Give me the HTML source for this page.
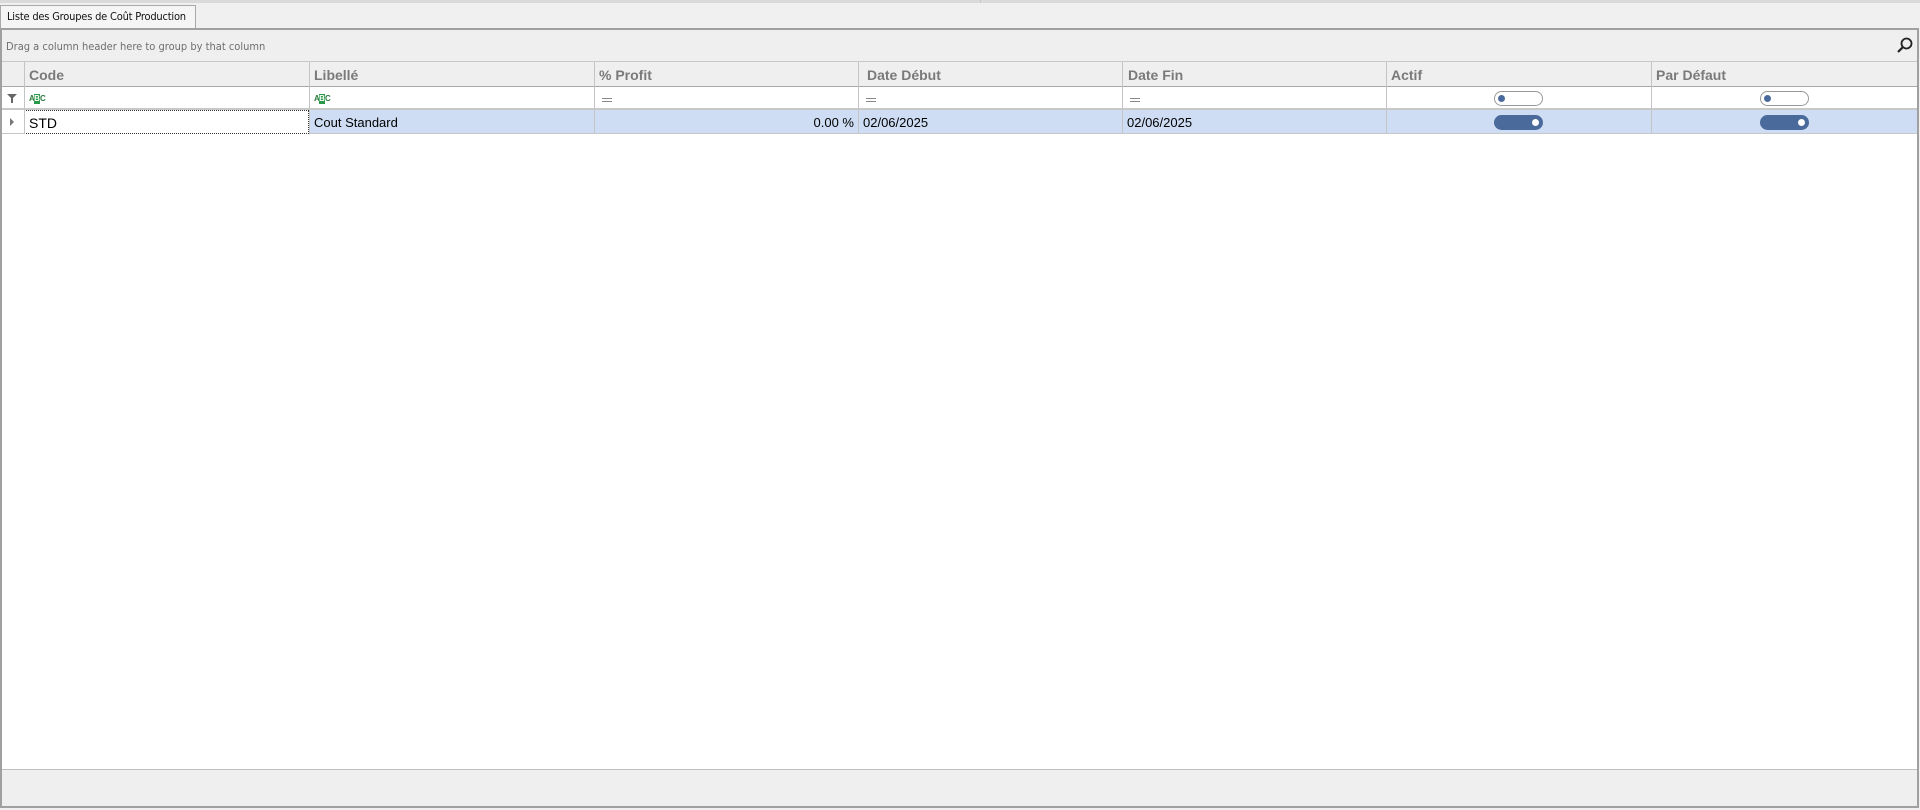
<!DOCTYPE html>
<html><head><meta charset="utf-8"><style>
*{margin:0;padding:0;box-sizing:border-box}
body{width:1920px;height:810px;background:#f0f0f0;position:relative;overflow:hidden;font-family:Tahoma,"DejaVu Sans","Liberation Sans",sans-serif}
.a{position:absolute}
.t{font-size:13px;color:#000;font-family:"Liberation Sans",sans-serif}
.h{font-size:14px;color:#7a7a7a;font-weight:bold;font-family:"Liberation Sans",sans-serif}
.abc{position:absolute;height:10px;font-family:"Liberation Sans",sans-serif;font-size:8px;line-height:10px;font-weight:bold;color:#2a7a3a}
.abc span{display:inline-block;width:5px;text-align:center}
.abc .m{background:#2a9a4a;color:#fff;width:6px}
</style></head><body>
<div class="a" style="left:0;top:0;width:1920px;height:3px;background:#dadada"></div>
<div class="a" style="left:980px;top:0;width:1px;height:3px;background:#c8c8c8"></div>
<div class="a" style="left:0;top:5px;width:196px;height:24px;background:#f5f5f5;border:1px solid #a8a8a8;border-bottom:none"></div>
<div class="a" style="left:7px;top:10px;font-size:11px;color:#111;font-family:'DejaVu Sans Condensed','Liberation Sans Narrow','Liberation Sans',sans-serif;letter-spacing:-0.2px">Liste des Groupes de Coût Production</div>
<div class="a" style="left:0;top:28px;width:1919px;height:780px;border:2px solid #a0a0a0;background:#fff"></div>
<div class="a" style="left:2px;top:30px;width:1915px;height:32px;background:#efefef;border-bottom:1px solid #c8c8c8"></div>
<div class="a" style="left:6px;top:40px;font-size:11px;color:#6f6f6f;font-family:'DejaVu Sans Condensed','Liberation Sans',sans-serif">Drag a column header here to group by that column</div>
<svg class="a" style="left:1896px;top:37px" width="18" height="17" viewBox="0 0 18 17"><circle cx="10.5" cy="6.5" r="5" fill="none" stroke="#222" stroke-width="1.8"/><path d="M7 10 L2 15" stroke="#222" stroke-width="2.2"/></svg>
<div class="a" style="left:2px;top:62px;width:1915px;height:25px;background:#efefef;border-bottom:1px solid #a8a8a8"></div>
<div class="a" style="left:2px;top:87px;width:1915px;height:23px;background:#fff;border-bottom:2px solid #c8c8c8"></div>
<div class="a" style="left:24px;top:110px;width:1893px;height:24px;background:#cfddf4;border-bottom:1px solid #c8c8c8"></div>
<div class="a" style="left:2px;top:110px;width:22px;height:24px;background:#fff;border-bottom:1px solid #c8c8c8"></div>
<div class="a" style="left:24px;top:110px;width:285px;height:24px;background:#fff;border:1px dotted #333"></div>
<div class="a" style="left:24px;top:62px;width:1px;height:72px;background:#c4c4c4"></div>
<div class="a" style="left:309px;top:62px;width:1px;height:72px;background:#c4c4c4"></div>
<div class="a" style="left:594px;top:62px;width:1px;height:72px;background:#c4c4c4"></div>
<div class="a" style="left:858px;top:62px;width:1px;height:72px;background:#c4c4c4"></div>
<div class="a" style="left:1122px;top:62px;width:1px;height:72px;background:#c4c4c4"></div>
<div class="a" style="left:1386px;top:62px;width:1px;height:72px;background:#c4c4c4"></div>
<div class="a" style="left:1651px;top:62px;width:1px;height:72px;background:#c4c4c4"></div>
<div class="a h" style="left:29px;top:67px">Code</div>
<div class="a h" style="left:314px;top:67px">Libellé</div>
<div class="a h" style="left:599px;top:67px">% Profit</div>
<div class="a h" style="left:867px;top:67px">Date Début</div>
<div class="a h" style="left:1128px;top:67px">Date Fin</div>
<div class="a h" style="left:1391px;top:67px">Actif</div>
<div class="a h" style="left:1656px;top:67px">Par Défaut</div>
<svg class="a" style="left:7px;top:94px" width="10" height="9"><path d="M0 0H10L6 4V9H4V4Z" fill="#666"/></svg>
<div class="abc" style="left:29px;top:94px"><span>A</span><span class="m">B</span><span>C</span></div>
<div class="abc" style="left:314px;top:94px"><span>A</span><span class="m">B</span><span>C</span></div>
<div class="a" style="left:602px;top:98px;width:10px;height:4px;border-top:1px solid #888;border-bottom:1px solid #888"></div>
<div class="a" style="left:866px;top:98px;width:10px;height:4px;border-top:1px solid #888;border-bottom:1px solid #888"></div>
<div class="a" style="left:1130px;top:98px;width:10px;height:4px;border-top:1px solid #888;border-bottom:1px solid #888"></div>
<div class="a" style="left:1494px;top:91px;width:49px;height:15px;border:1px solid #999;border-radius:8px;background:#fff"></div>
<div class="a" style="left:1498px;top:95px;width:7px;height:7px;border-radius:50%;background:#4a6a9c"></div>
<div class="a" style="left:1760px;top:91px;width:49px;height:15px;border:1px solid #999;border-radius:8px;background:#fff"></div>
<div class="a" style="left:1764px;top:95px;width:7px;height:7px;border-radius:50%;background:#4a6a9c"></div>
<svg class="a" style="left:10px;top:118px" width="5" height="8"><path d="M0 0L4 4L0 8Z" fill="#777"/></svg>
<div class="a t" style="left:29px;top:115px;font-size:14px">STD</div>
<div class="a t" style="left:314px;top:115px">Cout Standard</div>
<div class="a t" style="left:600px;top:115px;width:254px;text-align:right">0.00 %</div>
<div class="a t" style="left:863px;top:115px">02/06/2025</div>
<div class="a t" style="left:1127px;top:115px">02/06/2025</div>
<div class="a" style="left:1494px;top:115px;width:49px;height:15px;border-radius:8px;background:#4a6a9c"></div>
<div class="a" style="left:1532px;top:119px;width:7px;height:7px;border-radius:50%;background:#fff"></div>
<div class="a" style="left:1760px;top:115px;width:49px;height:15px;border-radius:8px;background:#4a6a9c"></div>
<div class="a" style="left:1798px;top:119px;width:7px;height:7px;border-radius:50%;background:#fff"></div>
<div class="a" style="left:2px;top:769px;width:1915px;height:37px;background:#efefef;border-top:1px solid #c0c0c0"></div>
</body></html>
